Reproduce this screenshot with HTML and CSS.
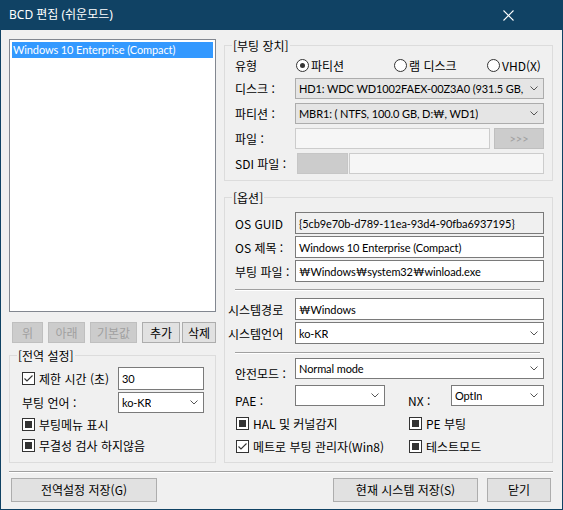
FILE: index.html
```html
<!DOCTYPE html>
<html lang="ko">
<head>
<meta charset="utf-8">
<title>BCD 편집 (쉬운모드)</title>
<link rel="stylesheet" href="styles.css">
</head>
<body>
<div class="window">
  <div class="titlebar">
    <span class="title">BCD 편집 (쉬운모드)</span>
    <svg class="close" width="11" height="11" viewBox="0 0 11 11"><path d="M0.5 0.5 L10.5 10.5 M10.5 0.5 L0.5 10.5" stroke="#fff" stroke-width="1.1" fill="none"/></svg>
  </div>
  <div class="content">
    <div class="main">
      <div class="left">
        <div class="listbox">
          <div class="item sel">Windows 10 Enterprise (Compact)</div>
        </div>
        <div class="btnrow">
          <div class="btn dis b1">위</div>
          <div class="btn dis b2">아래</div>
          <div class="btn dis b3">기본값</div>
          <div class="btn b4">추가</div>
          <div class="btn b5">삭제</div>
        </div>
        <div class="group global">
          <div class="legend">[전역 설정]</div>
          <div class="ggrid">
            <div class="chk"><span class="cb checked"><svg width="11" height="11" viewBox="0 0 11 11"><path d="M1.5 5.5 L4 8 L9.5 2.5" stroke="#333" stroke-width="1.1" fill="none"/></svg></span><span class="lbl-k">제한 시간 (초)</span></div>
            <div class="tb">30</div>
            <div class="glbl">부팅 언어 :</div>
            <div class="combo white"><span>ko-KR</span><svg class="chev" width="8" height="5" viewBox="0 0 8 5"><path d="M0.5 0.5 L4 4 L7.5 0.5" stroke="#555" fill="none"/></svg></div>
            <div class="chk span2"><span class="cb ind"></span><span class="lbl-k">부팅메뉴 표시</span></div>
            <div class="chk span2"><span class="cb ind"></span><span class="lbl-k">무결성 검사 하지않음</span></div>
          </div>
        </div>
      </div>
      <div class="right">
        <div class="group boot">
          <div class="legend">[부팅 장치]</div>
          <div class="bgrid">
            <div class="lbl">유형</div>
            <div class="radios">
              <div class="radio r1"><span class="rb on"></span><span class="lbl-k">파티션</span></div>
              <div class="radio r2"><span class="rb"></span><span class="lbl-k">램 디스크</span></div>
              <div class="radio r3"><span class="rb"></span><span class="lbl-k">VHD(X)</span></div>
            </div>
            <div class="lbl">디스크 :</div>
            <div class="combo gray"><span>HD1: WDC WD1002FAEX-00Z3A0 (931.5 GB, D</span><svg class="chev" width="8" height="5" viewBox="0 0 8 5"><path d="M0.5 0.5 L4 4 L7.5 0.5" stroke="#555" fill="none"/></svg></div>
            <div class="lbl">파티션 :</div>
            <div class="combo gray"><span>MBR1: ( NTFS, 100.0 GB, D:₩, WD1)</span><svg class="chev" width="8" height="5" viewBox="0 0 8 5"><path d="M0.5 0.5 L4 4 L7.5 0.5" stroke="#555" fill="none"/></svg></div>
            <div class="lbl">파일 :</div>
            <div class="filerow"><div class="tb disabled file"></div><div class="btn dis more">&gt;&gt;&gt;</div></div>
            <div class="lbl">SDI 파일 :</div>
            <div class="filerow"><div class="sdibox"></div><div class="tb disabled sdi"></div></div>
          </div>
        </div>
        <div class="group options">
          <div class="legend">[옵션]</div>
          <div class="orows">
            <div class="frow r-guid"><div class="lbl">OS GUID</div><div class="tb ro field">{5cb9e70b-d789-11ea-93d4-90fba6937195}</div></div>
            <div class="frow r-next"><div class="lbl">OS 제목 :</div><div class="tb field">Windows 10 Enterprise (Compact)</div></div>
            <div class="frow r-next"><div class="lbl">부팅 파일 :</div><div class="tb field">₩Windows₩system32₩winload.exe</div></div>
            <div class="hsep s1"></div>
            <div class="frow r-sys"><div class="lbl wide">시스템경로</div><div class="tb field">₩Windows</div></div>
            <div class="frow r-next"><div class="lbl wide">시스템언어</div><div class="combo white field"><span>ko-KR</span><svg class="chev" width="8" height="5" viewBox="0 0 8 5"><path d="M0.5 0.5 L4 4 L7.5 0.5" stroke="#555" fill="none"/></svg></div></div>
            <div class="hsep s2"></div>
            <div class="frow r-safe"><div class="lbl low">안전모드 :</div><div class="combo white field"><span>Normal mode</span><svg class="chev" width="8" height="5" viewBox="0 0 8 5"><path d="M0.5 0.5 L4 4 L7.5 0.5" stroke="#555" fill="none"/></svg></div></div>
            <div class="frow r-pae">
              <div class="lbl low">PAE :</div>
              <div class="combo white pae"><span></span><svg class="chev" width="8" height="5" viewBox="0 0 8 5"><path d="M0.5 0.5 L4 4 L7.5 0.5" stroke="#555" fill="none"/></svg></div>
              <div class="lbl low nx">NX :</div>
              <div class="combo white nxsel"><span>OptIn</span><svg class="chev" width="8" height="5" viewBox="0 0 8 5"><path d="M0.5 0.5 L4 4 L7.5 0.5" stroke="#555" fill="none"/></svg></div>
            </div>
            <div class="crow c1">
              <div class="chk first"><span class="cb ind"></span><span class="lbl-k">HAL 및 커널감지</span></div>
              <div class="chk"><span class="cb ind"></span><span class="lbl-k">PE 부팅</span></div>
            </div>
            <div class="crow c2">
              <div class="chk first"><span class="cb checked"><svg width="11" height="11" viewBox="0 0 11 11"><path d="M1.5 5.5 L4 8 L9.5 2.5" stroke="#333" stroke-width="1.1" fill="none"/></svg></span><span class="lbl-k">메트로 부팅 관리자(Win8)</span></div>
              <div class="chk"><span class="cb ind"></span><span class="lbl-k">테스트모드</span></div>
            </div>
          </div>
        </div>
      </div>
    </div>
    <div class="sep"></div>
    <div class="footer">
      <div class="btn fb1">전역설정 저장(G)</div>
      <div class="spacer"></div>
      <div class="btn fb2">현재 시스템 저장(S)</div>
      <div class="btn fb3">닫기</div>
    </div>
  </div>
</div>
</body>
</html>
```

FILE: styles.css
```css
* { box-sizing: border-box; }

body {
  margin: 0;
  background: #ffffff;
  font-family: Lato, "Noto Sans CJK KR", sans-serif;
  font-size: 11px;
  letter-spacing: -0.1px;
  color: #000;
}

.window {
  width: 563px;
  height: 510px;
  background: #f0f0f0;
  border: 1px solid #104264;
  border-top: 0;
  display: flex;
  flex-direction: column;
}

.titlebar {
  height: 30px;
  flex: none;
  margin: 0 -1px;
  background: #104264;
  color: #fff;
  display: flex;
  align-items: center;
  justify-content: space-between;
  padding: 0 49px 0 9px;
}
.title { font-family: "Noto Sans", "Noto Sans CJK KR", sans-serif; font-size: 12px; line-height: 16px; letter-spacing: 0; }
.close { display: block; }

.content {
  padding: 9px 9px 0 8px;
}

.main {
  display: grid;
  grid-template-columns: 207px 329px;
  column-gap: 8px;
  align-items: start;
}

.left { display: flex; flex-direction: column; }

.listbox {
  height: 273px;
  border: 1px solid #828790;
  background: #fff;
  padding: 2px;
}
.item {
  height: 16px;
  line-height: 16px;
  padding-left: 1px;
  white-space: nowrap;
}
.item.sel { background: #3399ff; color: #fff; }

.btnrow {
  margin-top: 10px;
  height: 21px;
  display: flex;
  padding-left: 3px;
}
.btn {
  border: 1px solid #adadad;
  background: #e1e1e1;
  display: flex;
  align-items: center;
  justify-content: center;
  white-space: nowrap;
  line-height: 14px;
  font-family: "Noto Sans CJK KR", sans-serif;
  font-size: 12px;
  letter-spacing: 0;
}
.btn.dis { background: #cccccc; border-color: #bfbfbf; color: #a0a0a0; }
.b1 { width: 31px; }
.b2 { width: 37px; margin-left: 5px; }
.b3 { width: 47px; margin-left: 5px; }
.b4 { width: 38px; margin-left: 5px; }
.b5 { width: 34px; margin-left: 2px; }

.group {
  border: 1px solid #dcdcdc;
}
.legend {
  margin: -8px 0 0 7px;
  padding: 0 1px;
  background: #f0f0f0;
  width: max-content;
  line-height: 15px;
  font-family: "Noto Sans CJK KR", sans-serif;
  font-size: 12px;
  letter-spacing: 0;
}

.lbl, .lbl-k, .glbl {
  font-family: "Noto Sans CJK KR", sans-serif;
  font-size: 12px;
  letter-spacing: 0;
  line-height: 15px;
  white-space: nowrap;
}

/* global settings */
.global { margin-top: 12px; height: 108px; }
.ggrid {
  margin-top: 4px;
  padding-left: 12px;
  display: grid;
  grid-template-columns: 96px 86px;
  grid-template-rows: 23px 21px 19px 19px;
  row-gap: 2px;
  align-items: center;
}
.span2 { grid-column: 1 / 3; }

.chk { display: flex; align-items: center; }
.cb {
  width: 13px;
  height: 13px;
  border: 1px solid #333;
  background: #fff;
  flex: none;
  display: flex;
  align-items: center;
  justify-content: center;
  margin-right: 4px;
}
.cb.ind::after {
  content: "";
  width: 7px;
  height: 7px;
  background: #333;
}
.cb svg { display: block; }

.tb {
  height: 100%;
  border: 1px solid #7a7a7a;
  background: #fff;
  padding-left: 3px;
  display: flex;
  align-items: center;
  white-space: nowrap;
  overflow: hidden;
}
.tb.ro { background: #f0f0f0; }
.tb.disabled { border-color: #cccccc; background: #f6f6f6; }

.combo {
  height: 100%;
  display: flex;
  align-items: center;
  justify-content: space-between;
  padding: 0 5px 0 3px;
  white-space: nowrap;
  overflow: hidden;
}
.combo span { overflow: hidden; }
.combo.white { border: 1px solid #7a7a7a; background: #fff; }
.combo.gray { border: 1px solid #acacac; background: #e5e5e5; }
.chev { flex: none; display: block; margin-left: 4px; }

/* boot device */
.right { display: flex; flex-direction: column; }
.boot { margin-top: 6px; height: 136px; }
.bgrid {
  margin-top: 3px;
  padding: 0 8px 0 10px;
  display: grid;
  grid-template-columns: 60px 249px;
  grid-template-rows: 18px 21px 21px 21px 21px;
  row-gap: 4px;
  align-items: center;
}
.bgrid > .combo, .bgrid > .filerow { height: 21px; }

.radios { display: flex; align-items: center; }
.radio { display: flex; align-items: center; }
.r1 { width: 98px; margin-left: 1px; }
.r2 { width: 93px; }
.rb {
  width: 13px;
  height: 13px;
  border: 1px solid #333;
  border-radius: 50%;
  background: #fff;
  margin-right: 2px;
  display: flex;
  align-items: center;
  justify-content: center;
  flex: none;
}
.rb.on::after {
  content: "";
  width: 5px;
  height: 5px;
  border-radius: 50%;
  background: #333;
}

.filerow { display: flex; }
.tb.file { width: 195px; }
.btn.more { width: 50px; margin-left: 4px; font-family: Lato, sans-serif; font-size: 11px; }
.sdibox {
  width: 51px;
  margin-left: 2px;
  background: #cccccc;
  border: 1px solid #c6c6c6;
}
.tb.sdi { width: 195px; margin-left: 1px; }

/* options */
.options { margin-top: 16px; height: 266px; }
.orows {
  padding: 0 8px 0 10px;
  display: flex;
  flex-direction: column;
}
.frow { display: flex; align-items: center; height: 22px; }
.frow .lbl { width: 60px; flex: none; }
.frow .lbl.wide { margin-left: -7px; width: 67px; }
.frow .lbl.low { align-self: flex-end; margin-bottom: -2px; }
.field { width: 249px; }
.r-guid { margin-top: 7px; }
.r-next { margin-top: 2px; }
.hsep {
  height: 2px;
  border-top: 1px solid #a0a0a0;
  border-bottom: 1px solid #fff;
  width: 305px;
}
.s1 { margin-top: 7px; }
.r-sys { margin-top: 7px; }
.s2 { margin-top: 8px; }
.r-safe { margin-top: 4px; height: 21px; }
.r-pae { margin-top: 6px; height: 21px; }
.combo.pae { width: 90px; }
.frow .lbl.nx { width: 43px; margin-left: 23px; }
.combo.nxsel { width: 93px; }

.crow { display: flex; align-items: center; height: 19px; }
.crow .chk.first { width: 173px; margin-left: 1px; }
.c1 { margin-top: 8px; }
.c2 { margin-top: 4px; }

.sep {
  margin-top: 8px;
  height: 2px;
  border-top: 1px solid #a0a0a0;
  border-bottom: 1px solid #fff;
}

.footer {
  margin-top: 5px;
  height: 24px;
  display: flex;
}
.footer .btn { height: 24px; }
.fb1 { width: 146px; margin-left: 2px; }
.spacer { flex: 1; }
.fb2 { width: 145px; }
.fb3 { width: 64px; margin-left: 9px; margin-right: 2px; }
```
